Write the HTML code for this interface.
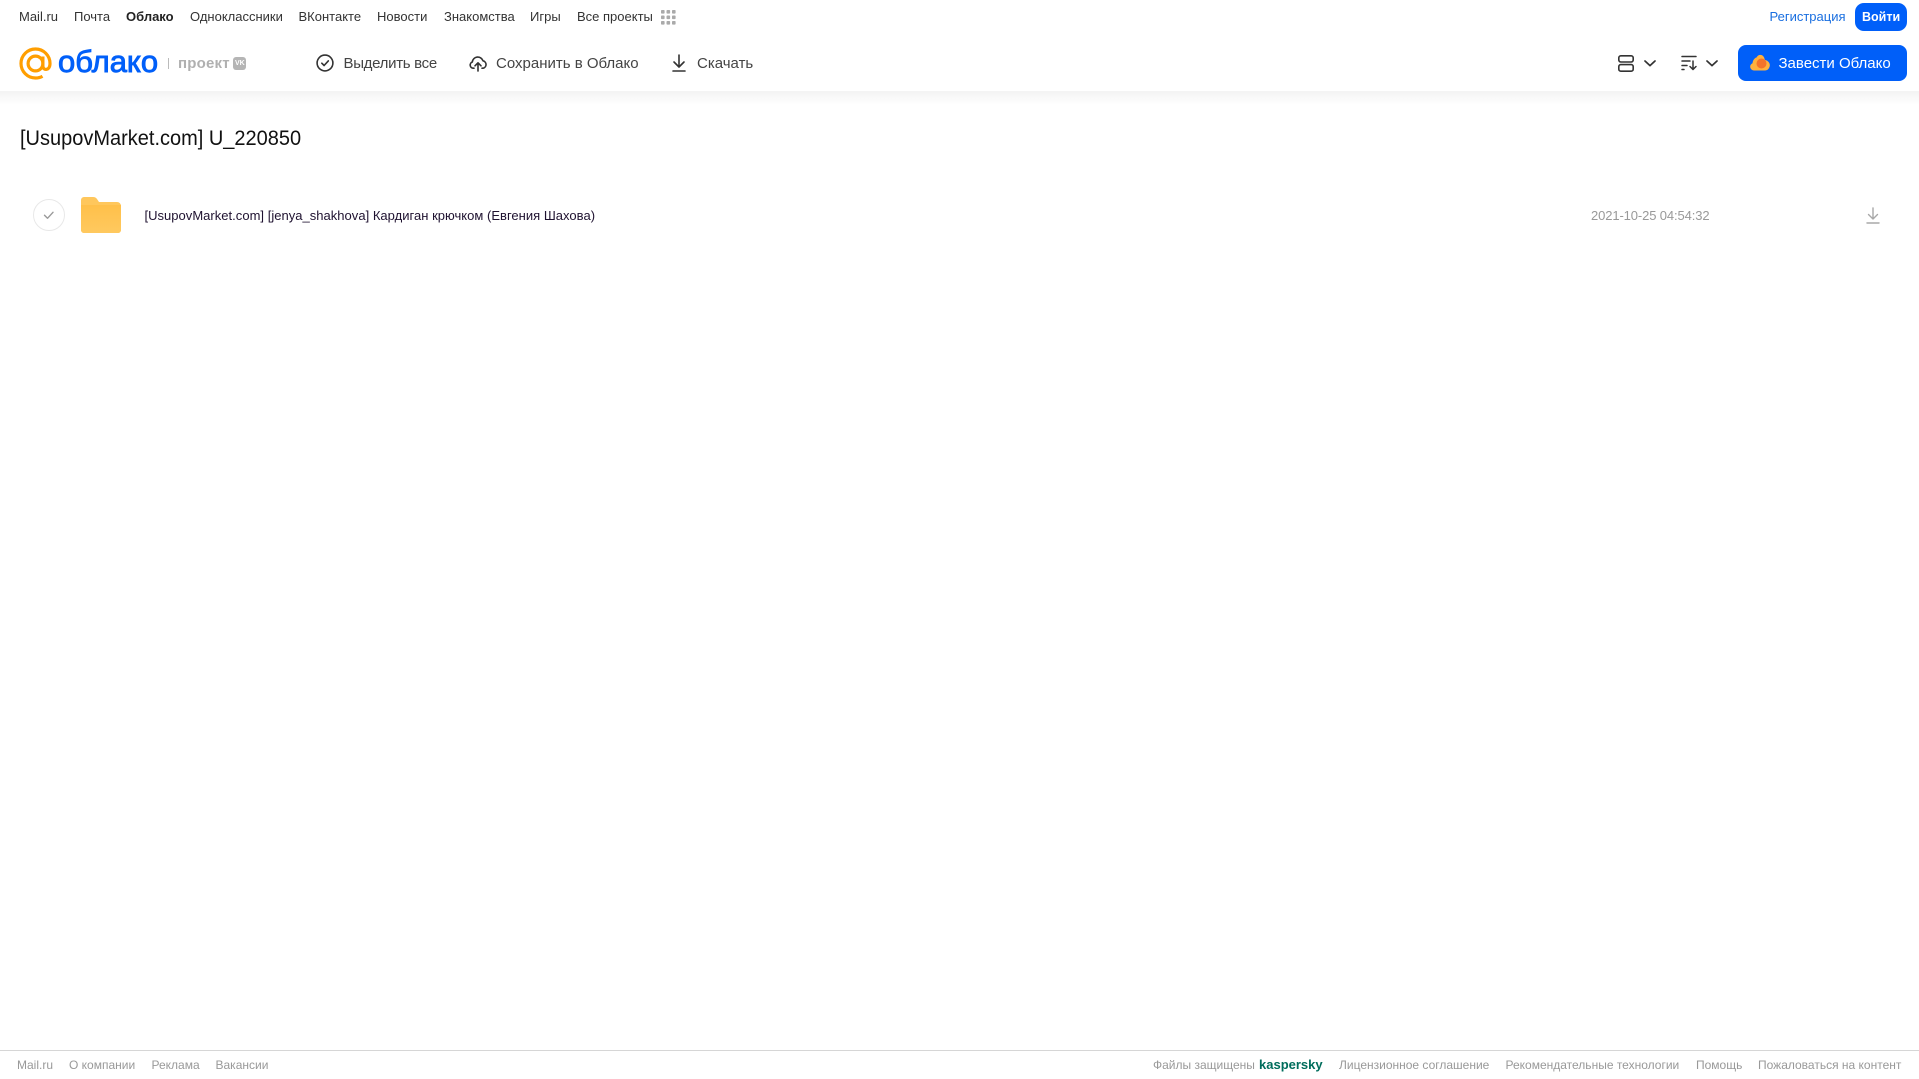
<!DOCTYPE html>
<html lang="ru">
<head>
<meta charset="utf-8">
<title>Облако</title>
<style>
html,body{margin:0;padding:0;background:#fff;width:1919px;height:1079px;overflow:hidden}
body{position:relative;font-family:"Liberation Sans","DejaVu Sans",sans-serif;color:#2c2d2e}
.t{position:absolute;white-space:nowrap;line-height:1}
.n{top:10px;font-size:13px;color:#333}
.b{top:56px;font-size:15px;color:#444}
.f{top:1059px;font-size:12px;color:#999}
svg{position:absolute;display:block}
#sh{position:absolute;left:0;top:91px;width:1919px;height:14px;background:linear-gradient(#f3f3f3,#fff)}
#fl{position:absolute;left:0;top:1050px;width:1919px;height:1px;background:#d6d6d6}
</style>
</head>
<body>
<div id="sh"></div>
<span class="t n" style="left:19px">Mail.ru</span>
<span class="t n" style="left:74px">Почта</span>
<span class="t n" style="left:126px;font-weight:bold;color:#222">Облако</span>
<span class="t n" style="left:190px">Одноклассники</span>
<span class="t n" style="left:298.500px">ВКонтакте</span>
<span class="t n" style="left:377px">Новости</span>
<span class="t n" style="left:444px">Знакомства</span>
<span class="t n" style="left:530px">Игры</span>
<span class="t n" style="left:577px">Все проекты</span>
<svg style="left:661px;top:10px" width="15" height="15" viewBox="0 0 15 15" fill="#aaa"><rect x="0" y="0" width="3.6" height="3.6" rx=".8"/><rect x="5.5" y="0" width="3.6" height="3.6" rx=".8"/><rect x="11" y="0" width="3.6" height="3.6" rx=".8"/><rect x="0" y="5.5" width="3.6" height="3.6" rx=".8"/><rect x="5.5" y="5.5" width="3.6" height="3.6" rx=".8"/><rect x="11" y="5.5" width="3.6" height="3.6" rx=".8"/><rect x="0" y="11" width="3.6" height="3.6" rx=".8"/><rect x="5.5" y="11" width="3.6" height="3.6" rx=".8"/><rect x="11" y="11" width="3.6" height="3.6" rx=".8"/></svg>

<span class="t n" style="left:1769.500px;color:#1a6fe0">Регистрация</span>
<div style="position:absolute;left:1855px;top:3px;width:52px;height:28px;background:#005ff9;border-radius:9px"></div>
<span class="t n" style="left:1862px;top:11px;color:#fff;font-weight:bold;font-size:12.500px">Войти</span>

<svg style="left:19px;top:47px" width="33" height="33" viewBox="0 0 33 33" fill="none" stroke="#ff9e00" stroke-width="3.2"><circle cx="16.5" cy="16.5" r="7.4"/><path d="M23.900 9.500v9.500c0 5 7.100 4.800 7.100-2.500C31 8.500 24.500 2 16.500 2S2 8.500 2 16.500 8.500 31 16.500 31c2.800 0 5-.6 7-1.800"/></svg>
<span class="t" style="left:58px;top:44px;font-size:31px;line-height:36px;color:#005ff9;-webkit-text-stroke:.9px #005ff9">облако</span>
<div style="position:absolute;left:168px;top:58px;width:1px;height:11px;background:#bbb"></div>
<span class="t" style="left:178px;top:56px;font-size:15px;color:#b0b0b0;font-weight:bold;letter-spacing:.2px">проект</span>
<div style="position:absolute;left:233px;top:57px;width:13px;height:13px;background:#b5b5b5;border-radius:3px"></div>
<span class="t" style="left:235px;top:60px;font-size:7px;color:#fff;font-weight:bold">VK</span>

<svg style="left:316px;top:54px" width="18" height="18" viewBox="0 0 18 18" fill="none" stroke="#333" stroke-width="1.6"><circle cx="9" cy="9" r="7.9"/><path d="M5.800 9.200l2.300 2.300 4.200-4.600" stroke-linecap="round" stroke-linejoin="round"/></svg>
<span class="t b" style="left:343.500px;letter-spacing:-.3px">Выделить все</span>

<svg style="left:469px;top:54px" width="18" height="18" viewBox="0 0 18 18" fill="none" stroke="#333" stroke-width="1.6" stroke-linecap="round" stroke-linejoin="round"><path d="M5 14.200H4.200A3.200 3.200 0 0 1 3.300 8 5.500 5.500 0 0 1 14 6.800a3.800 3.800 0 0 1 .2 7.400H13"/><path d="M9 17V9.200M6 11.800l3-3 3 3"/></svg>
<span class="t b" style="left:496px">Сохранить в Облако</span>

<svg style="left:670px;top:54px" width="18" height="18" viewBox="0 0 18 18" fill="none" stroke="#333" stroke-width="1.6" stroke-linecap="round" stroke-linejoin="round"><path d="M9 1v11.500M4 8l5 5 5-5"/><path d="M3 17h12"/></svg>
<span class="t b" style="left:697px">Скачать</span>

<svg style="left:1618px;top:55px" width="16" height="17" viewBox="0 0 16 17" fill="none" stroke="#333" stroke-width="1.6"><rect x=".8" y=".8" width="14.400" height="6.200" rx="2"/><rect x=".8" y="9.600" width="14.400" height="6.600" rx="2"/></svg>
<svg style="left:1644px;top:60px" width="12" height="7" viewBox="0 0 12 7" fill="none" stroke="#333" stroke-width="1.7" stroke-linecap="round" stroke-linejoin="round"><path d="M1 1l5 4.600L11 1"/></svg>
<svg style="left:1681px;top:55px" width="17" height="16" viewBox="0 0 17 16" fill="none" stroke="#333" stroke-width="1.5" stroke-linecap="round" stroke-linejoin="round"><path d="M1 1.500h14M1 6h8M1 10.500h5M1 14.500h2M12 6v8.500M9 11.500l3 3 3-3"/></svg>
<svg style="left:1706px;top:60px" width="12" height="7" viewBox="0 0 12 7" fill="none" stroke="#333" stroke-width="1.7" stroke-linecap="round" stroke-linejoin="round"><path d="M1 1l5 4.600L11 1"/></svg>

<div style="position:absolute;left:1738px;top:45px;width:169px;height:36px;background:#005ff9;border-radius:8px"></div>
<svg style="left:1750px;top:54px" width="20" height="17" viewBox="0 0 20 17"><path d="M4 16.500A3.800 3.800 0 0 1 2.500 9.200C3 5.500 5 3.800 6.500 3.500 8 .5 11.500 0 13.500 2.500 14.500 4 14.500 5 15 6 18 6.500 20 9 19.800 11.500 19.500 14.500 17.500 16.500 15 16.500z" fill="#ffb13d"/><circle cx="11.500" cy="9.500" r="5" fill="#f4732a"/></svg>
<span class="t" style="left:1778.500px;top:56px;font-size:15px;color:#fff">Завести Облако</span>

<span class="t" style="left:19.500px;top:128px;font-size:21px;color:#111;transform:scaleX(.952);transform-origin:0 0">[UsupovMarket.com] U_220850</span>

<svg style="left:33px;top:199px" width="32" height="32" viewBox="0 0 32 32" fill="none"><circle cx="16" cy="16" r="15.500" stroke="#e8e8e8"/><path d="M11.500 16.300l3 3 5.500-6" stroke="#999" stroke-width="1.400" stroke-linecap="round" stroke-linejoin="round"/></svg>
<svg style="left:81px;top:197px" width="40" height="36" viewBox="0 0 40 36"><defs><linearGradient id="g" x1="0" y1="0" x2="0" y2="1"><stop offset="0" stop-color="#ffc04a"/><stop offset="1" stop-color="#ffc95f"/></linearGradient></defs><path d="M0 3a3 3 0 0 1 3-3h9c2 0 3 .7 4 2l2 3h18a4 4 0 0 1 4 4v24a3 3 0 0 1-3 3H3a3 3 0 0 1-3-3z" fill="#ffc75c"/><path d="M0 8h40v25a3 3 0 0 1-3 3H3a3 3 0 0 1-3-3z" fill="url(#g)"/></svg>
<span class="t" style="left:144.500px;top:209px;font-size:13px;color:#1f1230;letter-spacing:.02px">[UsupovMarket.com] [jenya_shakhova] Кардиган крючком (Евгения Шахова)</span>
<span class="t" style="left:1591px;top:209px;font-size:13px;color:#999;letter-spacing:-.12px">2021-10-25 04:54:32</span>
<svg style="left:1866px;top:207px" width="14" height="17" viewBox="0 0 14 17" fill="none" stroke="#a8a8a8" stroke-width="1.400" stroke-linecap="round" stroke-linejoin="round"><path d="M7 1v10.500M2.500 7.500L7 12l4.500-4.500M1 16h12"/></svg>

<div id="fl"></div>
<span class="t f" style="left:17px">Mail.ru</span>
<span class="t f" style="left:69px">О компании</span>
<span class="t f" style="left:151.500px">Реклама</span>
<span class="t f" style="left:215.500px">Вакансии</span>
<span class="t f" style="left:1153px">Файлы защищены</span>
<span class="t f" style="left:1259px;top:1058px;font-size:13px;font-weight:bold;color:#006d5c">kaspersky</span>
<span class="t f" style="left:1339px">Лицензионное соглашение</span>
<span class="t f" style="left:1505.500px">Рекомендательные технологии</span>
<span class="t f" style="left:1696px">Помощь</span>
<span class="t f" style="left:1758px">Пожаловаться на контент</span>
</body>
</html>
